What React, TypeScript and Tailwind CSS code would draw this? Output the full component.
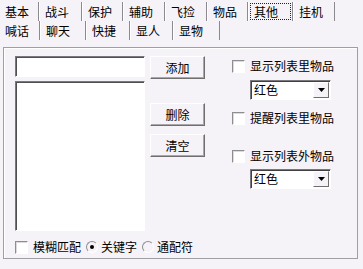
import type { ReactNode } from 'react'

const font = { fontFamily: '"Noto Sans CJK SC", "Liberation Sans", sans-serif' }

interface Tab {
  label: string
  w: number
  active?: boolean
}

// widths measured separator-to-separator in the reference
const row1: Tab[] = [
  { label: '基本', w: 39 },
  { label: '战斗', w: 43 },
  { label: '保护', w: 41 },
  { label: '辅助', w: 42 },
  { label: '飞捡', w: 42 },
  { label: '物品', w: 41 },
  { label: '其他', w: 45, active: true },
  { label: '挂机', w: 42 },
]

const row2: Tab[] = [
  { label: '喊话', w: 40 },
  { label: '聊天', w: 46 },
  { label: '快捷', w: 44 },
  { label: '显人', w: 43 },
  { label: '显物', w: 47 },
]

function TabRow({ tabs }: { tabs: Tab[] }) {
  return (
    <div className="flex h-[19px]">
      {tabs.map((t, i) => (
        <div
          key={t.label}
          style={{ width: t.w }}
          className={
            'flex items-center border-r border-r-[#8c8a8e] ' +
            (i === 0 ? 'pl-[5px]' : 'pl-[6px] shadow-[inset_1px_0_0_#ffffff]')
          }
        >
          <span
            className={
              t.active
                ? '-ml-[3px] pl-[3px] pr-[12px] leading-[15px] outline outline-1 outline-dotted outline-[#222]'
                : 'leading-[15px]'
            }
          >
            {t.label}
          </span>
        </div>
      ))}
    </div>
  )
}

function Button({ children, className }: { children: ReactNode; className?: string }) {
  return (
    <div
      className={
        'flex h-[23px] w-[55px] items-center justify-center border border-t-white border-l-white border-r-[#6f6f6f] border-b-[#6f6f6f] bg-[#f5f3f7] shadow-[inset_-1px_-1px_0_#a9a7ab] ' +
        (className ?? '')
      }
    >
      {children}
    </div>
  )
}

function Check({ children }: { children: ReactNode }) {
  return (
    <div className="flex items-center gap-[5px]">
      <span className="h-[13px] w-[13px] border border-t-[#8f8d91] border-l-[#8f8d91] border-r-white border-b-white bg-white shadow-[inset_1px_1px_0_#dcdadd]" />
      <span className="leading-[14px]">{children}</span>
    </div>
  )
}

function Radio({ children, on }: { children: ReactNode; on?: boolean }) {
  return (
    <div className="flex items-center gap-[3px]">
      <span className="flex h-[12px] w-[12px] items-center justify-center rounded-full border border-t-[#8f8d91] border-l-[#8f8d91] border-r-white border-b-white bg-[#f5f3f7]">
        {on && <span className="h-[4px] w-[4px] rounded-full bg-black" />}
      </span>
      <span className="leading-[14px]">{children}</span>
    </div>
  )
}

function Select() {
  return (
    <div className="flex h-[20px] w-[81px] items-center border border-t-[#7a787c] border-l-[#7a787c] border-r-white border-b-white bg-white shadow-[inset_1px_1px_0_#404040]">
      <span className="ml-[3px] flex-1 leading-[14px]">红色</span>
      <span className="mr-[1px] flex h-[16px] w-[16px] items-center justify-center border border-t-white border-l-white border-r-[#6f6f6f] border-b-[#6f6f6f] bg-[#f5f3f7]">
        <svg width="7" height="4" viewBox="0 0 7 4">
          <path d="M0 0h7L3.5 4z" fill="#000" />
        </svg>
      </span>
    </div>
  )
}

export default function App() {
  return (
    <div style={font} className="h-[269px] w-[363px] bg-[#f5f3f7] pt-[2px] text-[12px] text-black">
      <TabRow tabs={row1} />
      <TabRow tabs={row2} />
      <div className="ml-[3px] mt-[7px] h-[212px] w-[355px] border border-[#a09ea2] shadow-[inset_1px_1px_0_#ffffff]">
        <div className="flex pl-[11px] pt-[8px]">
          <div className="flex flex-col">
            <div className="h-[21px] w-[130px] border border-t-[#7a787c] border-l-[#7a787c] border-r-white border-b-white bg-white shadow-[inset_1px_1px_0_#505050]" />
            <div className="mt-[4px] h-[150px] w-[130px] border border-t-[#7a787c] border-l-[#7a787c] border-r-white border-b-white bg-white shadow-[inset_1px_1px_0_#505050]" />
          </div>
          <div className="ml-[5px] flex flex-col">
            <Button>添加</Button>
            <Button className="mt-[24px]">删除</Button>
            <Button className="mt-[8px]">清空</Button>
          </div>
          <div className="ml-[27px] flex flex-col pt-[3px]">
            <Check>显示列表里物品</Check>
            <div className="ml-[18px] mt-[7px]">
              <Select />
            </div>
            <div className="mt-[11px]">
              <Check>提醒列表里物品</Check>
            </div>
            <div className="mt-[24px]">
              <Check>显示列表外物品</Check>
            </div>
            <div className="ml-[18px] mt-[6px]">
              <Select />
            </div>
          </div>
        </div>
        <div className="flex items-center gap-[5px] pl-[11px] pt-[9px]">
          <Check>模糊匹配</Check>
          <Radio on>关键字</Radio>
          <Radio>通配符</Radio>
        </div>
      </div>
    </div>
  )
}
